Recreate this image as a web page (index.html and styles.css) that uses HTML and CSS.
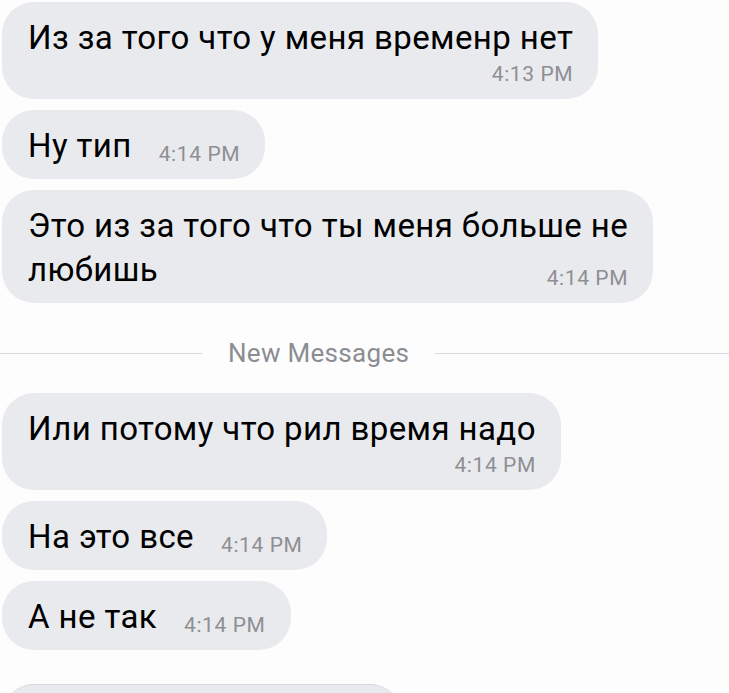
FILE: index.html
```html
<!DOCTYPE html>
<html lang="ru">
<head>
    <meta charset="UTF-8">
    <meta name="viewport" content="width=device-width, initial-scale=1.0">
    <title>Сообщения</title>
    <link rel="stylesheet" href="styles.css">
</head>
<body>
    <div class="chat">
        <div class="bubble stacked first">
            <div class="text">Из за того что у меня временр нет</div>
            <div class="time">4:13 PM</div>
        </div>
        <div class="bubble inline">
            <span class="text">Ну тип</span>
            <span class="time">4:14 PM</span>
        </div>
        <div class="bubble wrapped">
            <div class="text">Это из за того что ты меня больше не</div>
            <div class="last-line">
                <span class="text">любишь</span>
                <span class="time">4:14 PM</span>
            </div>
        </div>

        <div class="divider">
            <span class="line short"></span>
            <span class="label">New Messages</span>
            <span class="line"></span>
        </div>

        <div class="bubble stacked">
            <div class="text">Или потому что рил время надо</div>
            <div class="time">4:14 PM</div>
        </div>
        <div class="bubble inline">
            <span class="text">На это все</span>
            <span class="time">4:14 PM</span>
        </div>
        <div class="bubble inline">
            <span class="text">А не так</span>
            <span class="time">4:14 PM</span>
        </div>
        <div class="bubble next">
            <span class="text">&nbsp;</span>
        </div>
    </div>
</body>
</html>
```

FILE: styles.css
```css
body {
    margin: 0;
    padding: 0;
    background-color: #fdfdfd;
    font-family: 'Roboto', 'Liberation Sans', sans-serif;
    color: #000;
}
.chat {
    display: flex;
    flex-direction: column;
    align-items: flex-start;
    gap: 11px;
    padding: 2px 0 0 2px;
    height: 693px;
    box-sizing: border-box;
    overflow: hidden;
}
.bubble {
    flex-shrink: 0;
    background-color: #e9eaee;
    border-radius: 32px;
    padding: 14px 25px 11px 26px;
    box-sizing: border-box;
}
.text {
    font-size: 33px;
    letter-spacing: 0.4px;
    line-height: 44px;
}
.time {
    font-size: 21px;
    letter-spacing: 0.6px;
    color: #8e8e93;
}
.stacked .time {
    text-align: right;
    line-height: 28px;
}
.inline {
    display: flex;
    align-items: baseline;
    gap: 27px;
}
.inline .time {
    position: relative;
    top: 4px;
}
.last-line {
    display: flex;
    justify-content: space-between;
    align-items: baseline;
}
.last-line .time {
    position: relative;
    top: 4px;
}
.divider {
    flex-shrink: 0;
    display: flex;
    align-items: center;
    align-self: stretch;
    margin: 12px 0 2px -2px;
    height: 54px;
}
.divider .line {
    flex: 1;
    height: 1px;
    background-color: #d8d8dc;
}
.divider .line.short {
    flex: 0 0 202px;
}
.divider .label {
    padding: 0 26px;
    font-size: 26px;
    letter-spacing: 0.3px;
    color: #8a8d92;
}
.next {
    margin-top: 23px;
    width: 400px;
    height: 80px;
    border-top: 1px solid #d6d7db;
}
```
